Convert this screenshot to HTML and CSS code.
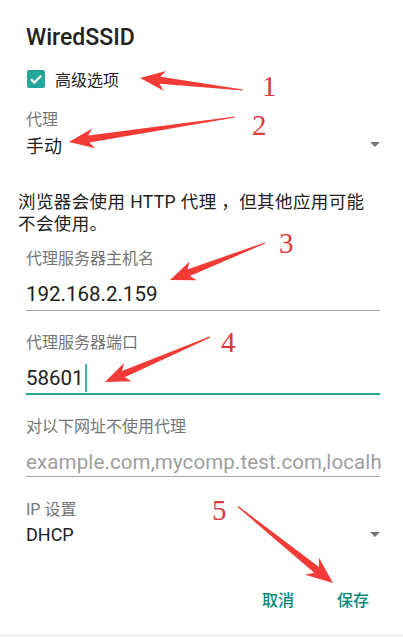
FILE: index.html
```html
<!DOCTYPE html>
<html lang="zh-CN">
<head>
<meta charset="utf-8">
<link rel="stylesheet" href="styles.css">
</head>
<body>
<div class="dialog">
  <h1 class="title">WiredSSID</h1>
  <div class="check-row">
    <span class="checkbox"><svg viewBox="0 0 18 18" width="18" height="18"><path d="M4 9.3l3.3 3.3L14.2 5.7" fill="none" stroke="#fff" stroke-width="2.2"/></svg></span>
    <span class="check-label">高级选项</span>
  </div>
  <div class="field-label label-proxy">代理</div>
  <div class="spinner"><span>手动</span><span class="caret"></span></div>
  <p class="note">浏览器会使用 HTTP 代理 ，但其他应用可能<br>不会使用。</p>
  <div class="field-label label-host">代理服务器主机名</div>
  <div class="input">192.168.2.159</div>
  <div class="field-label label-gap">代理服务器端口</div>
  <div class="input input-focus"><span>58601</span><span class="cursor"></span></div>
  <div class="field-label label-gap">对以下网址不使用代理</div>
  <div class="input input-hint">example.com,mycomp.test.com,localh</div>
  <div class="field-label label-ip">IP 设置</div>
  <div class="spinner"><span>DHCP</span><span class="caret"></span></div>
  <div class="actions">
    <span class="btn">取消</span>
    <span class="btn">保存</span>
  </div>
</div>
<svg class="annot" width="403" height="638" viewBox="0 0 403 638">
  <polygon class="arrow" transform="translate(140 78) rotate(6.65)" points="0,0 25,-10 20,-3.5 103.7,-0.6 103.7,0.6 20,3.5 25,10"/>
  <polygon class="arrow" transform="translate(69 142) rotate(-8.56)" points="0,0 25,-10 20,-3.5 167.9,-0.6 167.9,0.6 20,3.5 25,10"/>
  <polygon class="arrow" transform="translate(170 280) rotate(-21.3)" points="0,0 25,-10 20,-3.5 102,-0.6 102,0.6 20,3.5 25,10"/>
  <polygon class="arrow" transform="translate(105 382) rotate(-23.2)" points="0,0 25,-10 20,-3.5 114,-0.6 114,0.6 20,3.5 25,10"/>
  <polygon class="arrow" transform="translate(333 583) rotate(-141.2)" points="0,0 27,-11 21,-3.8 122,-0.6 122,0.6 21,3.8 27,11"/>
  <text class="num" x="262" y="96">1</text>
  <text class="num" x="252" y="135">2</text>
  <text class="num" x="279" y="253">3</text>
  <text class="num" x="221" y="352">4</text>
  <text class="num" x="212" y="520">5</text>
</svg>
</body>
</html>
```
FILE: styles.css
```css
html, body {
  margin: 0;
  padding: 0;
  background: #fff;
}
body {
  position: relative;
  width: 403px;
  height: 638px;
  overflow: hidden;
  font-family: Roboto, "Noto Sans CJK SC", sans-serif;
  color: #212121;
}
.dialog {
  box-sizing: border-box;
  height: 636px;
  padding: 24px 22px 0 26px;
  border-bottom: 1px solid #ececec;
}
.title {
  margin: 0;
  font-size: 23px;
  font-weight: 500;
  line-height: 28px;
}
.check-row {
  display: flex;
  align-items: center;
  height: 24px;
  margin-top: 15px;
}
.checkbox {
  width: 18px;
  height: 18px;
  margin-left: 1px;
  margin-right: 10px;
  background: #26a69a;
  border-radius: 2px;
  display: flex;
}
.check-label {
  font-size: 16px;
}
.field-label {
  font-size: 16px;
  line-height: 20px;
  color: #757575;
}
.label-proxy { margin-top: 19px; }
.spinner {
  display: flex;
  justify-content: space-between;
  align-items: center;
  height: 24px;
  margin-top: 2.5px;
  font-size: 18px;
}
.caret {
  width: 0;
  height: 0;
  margin-right: 1px;
  border-left: 5px solid transparent;
  border-right: 5px solid transparent;
  border-top: 5px solid #757575;
}
.note {
  margin: 34px -10px 0 -8px;
  font-size: 17.5px;
  line-height: 22px;
  letter-spacing: 0.4px;
  white-space: nowrap;
}
.label-host { margin-top: 14px; }
.label-gap { margin-top: 22.5px; }
.label-ip { margin-top: 23px; }
.input {
  margin-top: 12px;
  margin-right: 1px;
  font-size: 20.5px;
  line-height: 26px;
  padding-bottom: 3px;
  border-bottom: 1px solid #a8a8a8;
  white-space: nowrap;
}
.input-focus {
  display: flex;
  align-items: center;
  height: 26px;
  padding-bottom: 1.5px;
  border-bottom: 2px solid #26a69a;
}
.cursor {
  width: 2px;
  height: 28px;
  margin-left: 1px;
  background: #4db6ac;
}
.input-hint {
  color: #9e9e9e;
  padding-bottom: 1px;
  letter-spacing: 0.12px;
}
.actions {
  display: flex;
  justify-content: flex-end;
  gap: 43px;
  height: 24px;
  align-items: center;
  margin-top: 40px;
  margin-right: 12px;
}
.btn {
  font-size: 16px;
  font-weight: 500;
  color: #00897b;
}
.annot {
  position: absolute;
  left: 0;
  top: 0;
  pointer-events: none;
}
.arrow {
  fill: #f23b36;
}
.num {
  fill: #e0393c;
  font-family: "Liberation Serif", serif;
  font-size: 29px;
}
```
